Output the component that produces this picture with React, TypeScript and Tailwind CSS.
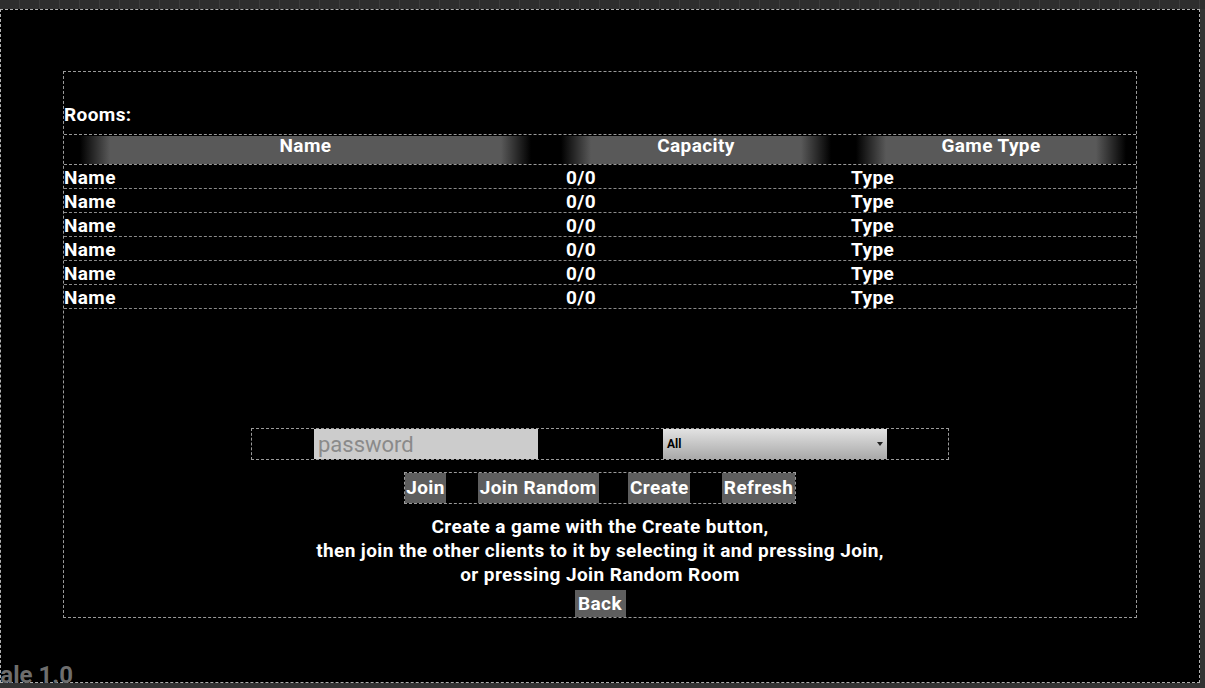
import React from "react";

const ROWS = Array.from({ length: 6 }, () => ({ name: "Name", capacity: "0/0", type: "Type" }));

const headFade =
  "bg-[linear-gradient(90deg,rgba(89,89,89,0)_0px,#595959_30px,#595959_calc(100%-30px),rgba(89,89,89,0)_100%)]";

function HeaderCell({ label, inset }: { label: string; inset: string }) {
  return (
    <div className={`flex h-full items-center ${inset}`}>
      <div className={`flex h-[28px] w-full items-center justify-center pb-[6px] ${headFade}`}>{label}</div>
    </div>
  );
}

function Btn({ label, w }: { label: string; w: string }) {
  return (
    <button className={`h-[30px] ${w} bg-[#5e5e5e] text-center text-[19px] font-bold leading-[30px] tracking-[0.4px] text-white`}>
      {label}
    </button>
  );
}

export default function App() {
  return (
    <div
      className="relative flex h-[688px] w-[1205px] flex-col overflow-hidden bg-[#2b2b2b] text-white"
      style={{ fontFamily: "Roboto, 'Liberation Sans', sans-serif" }}
    >
      {/* ruler strip */}
      <div className="h-[9px] shrink-0 bg-[repeating-linear-gradient(90deg,#2e2e2e_0px,#2e2e2e_19px,#3c3c3c_19px,#3c3c3c_20px)]" />

      <div className="flex flex-1">
        <div className="h-[674px] w-[1200px] border border-dashed border-[#b0b0b0] bg-black pl-[62px] pt-[61px]">
          {/* lobby panel */}
          <div className="flex h-[547px] w-[1074px] flex-col border border-dashed border-[#9a9a9a] pt-[31px] text-[19px] font-bold tracking-[0.4px]">
            <div className="h-[24px] leading-[24px]">Rooms:</div>

            <div className="mt-[7px] grid h-[31px] grid-cols-[502px_285px_1fr] border-y border-dashed border-[#9a9a9a]">
              <HeaderCell label="Name" inset="pl-[16px] pr-[35px]" />
              <HeaderCell label="Capacity" inset="-ml-[5px] pr-[20px]" />
              <HeaderCell label="Game Type" inset="pl-[5px] pr-[10px]" />
            </div>

            {ROWS.map((r, i) => (
              <div
                key={i}
                className="grid h-[24px] grid-cols-[502px_285px_1fr] border-b border-dashed border-[#8a8a8a] leading-[26px]"
              >
                <span>{r.name}</span>
                <span>{r.capacity}</span>
                <span>{r.type}</span>
              </div>
            ))}

            <div className="mx-auto mt-[119px] flex h-[32px] w-[698px] items-center border border-dashed border-[#9a9a9a] pl-[62px] tracking-normal">
              <div className="flex h-[30px] w-[224px] items-center bg-[#cccccc] pl-[4px] text-[22px] font-normal text-[#8a8a8a]">
                password
              </div>
              <div className="ml-[125px] flex h-[30px] w-[224px] items-center justify-between bg-[linear-gradient(180deg,#e2e2e2,#a9a9a9)] pl-[4px] pr-[4px] text-[12px] font-bold text-black">
                <span>All</span>
                <svg width="6" height="4" viewBox="0 0 6 4">
                  <path d="M0 0h6L3 4z" fill="#222" />
                </svg>
              </div>
            </div>

            <div className="mx-auto mt-[12px] flex h-[32px] w-[392px] items-center border border-dashed border-[#9a9a9a]">
              <Btn label="Join" w="w-[41px]" />
              <div className="w-[32px]" />
              <Btn label="Join Random" w="w-[121px]" />
              <div className="w-[30px]" />
              <Btn label="Create" w="w-[62px]" />
              <div className="w-[32px]" />
              <Btn label="Refresh" w="w-[73px]" />
            </div>

            <div className="mt-[11px] text-center leading-[24px]">
              <div>Create a game with the Create button,</div>
              <div>then join the other clients to it by selecting it and pressing Join,</div>
              <div>or pressing Join Random Room</div>
            </div>

            <div className="mt-[3px] flex justify-center">
              <button className="h-[27px] w-[51px] bg-[#5e5e5e] text-center text-[19px] font-bold leading-[27px] tracking-[0.4px] text-white">
                Back
              </button>
            </div>
          </div>
        </div>
        <div className="flex-1 bg-[#333333]" />
      </div>

      <div className="h-[5px] shrink-0 bg-[#333333]" />

      <div className="absolute bottom-[-5px] left-[-27px] text-[24px] font-bold text-[#6e6e6e]">Scale 1.0</div>
    </div>
  );
}
